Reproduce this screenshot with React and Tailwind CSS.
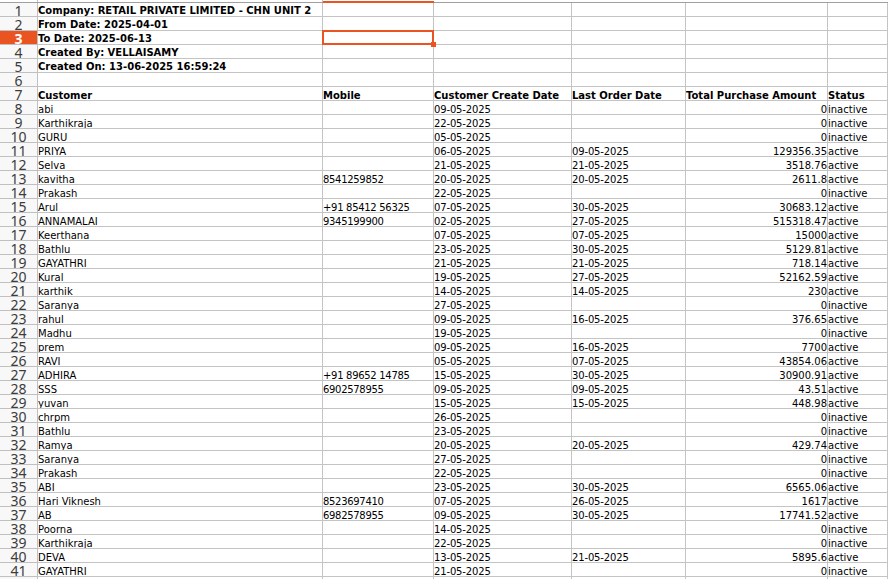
const rows = [
  ['abi', '', '09-05-2025', '', '0', 'inactive'],
  ['Karthikraja', '', '22-05-2025', '', '0', 'inactive'],
  ['GURU', '', '05-05-2025', '', '0', 'inactive'],
  ['PRIYA', '', '06-05-2025', '09-05-2025', '129356.35', 'active'],
  ['Selva', '', '21-05-2025', '21-05-2025', '3518.76', 'active'],
  ['kavitha', '8541259852', '20-05-2025', '20-05-2025', '2611.8', 'active'],
  ['Prakash', '', '22-05-2025', '', '0', 'inactive'],
  ['Arul', '+91 85412 56325', '07-05-2025', '30-05-2025', '30683.12', 'active'],
  ['ANNAMALAI', '9345199900', '02-05-2025', '27-05-2025', '515318.47', 'active'],
  ['Keerthana', '', '07-05-2025', '07-05-2025', '15000', 'active'],
  ['Bathlu', '', '23-05-2025', '30-05-2025', '5129.81', 'active'],
  ['GAYATHRI', '', '21-05-2025', '21-05-2025', '718.14', 'active'],
  ['Kural', '', '19-05-2025', '27-05-2025', '52162.59', 'active'],
  ['karthik', '', '14-05-2025', '14-05-2025', '230', 'active'],
  ['Saranya', '', '27-05-2025', '', '0', 'inactive'],
  ['rahul', '', '09-05-2025', '16-05-2025', '376.65', 'active'],
  ['Madhu', '', '19-05-2025', '', '0', 'inactive'],
  ['prem', '', '09-05-2025', '16-05-2025', '7700', 'active'],
  ['RAVI', '', '05-05-2025', '07-05-2025', '43854.06', 'active'],
  ['ADHIRA', '+91 89652 14785', '15-05-2025', '30-05-2025', '30900.91', 'active'],
  ['SSS', '6902578955', '09-05-2025', '09-05-2025', '43.51', 'active'],
  ['yuvan', '', '15-05-2025', '15-05-2025', '448.98', 'active'],
  ['chrpm', '', '26-05-2025', '', '0', 'inactive'],
  ['Bathlu', '', '23-05-2025', '', '0', 'inactive'],
  ['Ramya', '', '20-05-2025', '20-05-2025', '429.74', 'active'],
  ['Saranya', '', '27-05-2025', '', '0', 'inactive'],
  ['Prakash', '', '22-05-2025', '', '0', 'inactive'],
  ['ABI', '', '23-05-2025', '30-05-2025', '6565.06', 'active'],
  ['Hari Viknesh', '8523697410', '07-05-2025', '26-05-2025', '1617', 'active'],
  ['AB', '6982578955', '09-05-2025', '30-05-2025', '17741.52', 'active'],
  ['Poorna', '', '14-05-2025', '', '0', 'inactive'],
  ['Karthikraja', '', '22-05-2025', '', '0', 'inactive'],
  ['DEVA', '', '13-05-2025', '21-05-2025', '5895.6', 'active'],
  ['GAYATHRI', '', '21-05-2025', '', '0', 'inactive'],
];

const info = [
  'Company: RETAIL PRIVATE LIMITED - CHN UNIT 2',
  'From Date: 2025-04-01',
  'To Date: 2025-06-13',
  'Created By: VELLAISAMY',
  'Created On: 13-06-2025 16:59:24',
  '',
];

const head = ['Customer', 'Mobile', 'Customer Create Date', 'Last Order Date', 'Total Purchase Amount', 'Status'];

const widths = ['w-[285px]', 'w-[111px]', 'w-[138px]', 'w-[114px]', 'w-[142px]', 'w-[60px]'];

function RowNum({ n, active }) {
  return (
    <div
      className={`w-[38px] shrink-0 h-full text-center border-r border-b border-[#c0c0c0] text-[14px] leading-[11px] pt-[2px] font-['Noto_Sans',sans-serif] ${
        active ? 'bg-[#e95420] text-white font-bold' : 'bg-[#f8f8f8] text-[#3c3c3c]'
      }`}
    >
      {n}
    </div>
  );
}

function Cell({ i, children, bold, right, overflow, tight }) {
  return (
    <div
      className={`${widths[i]} shrink-0 h-full border-r border-b border-[#c4c4c4] whitespace-nowrap ${
        overflow ? 'overflow-visible leading-[15px]' : 'overflow-hidden leading-[17px]'
      } ${bold ? 'font-bold' : ''} ${right ? 'text-right' : ''} ${tight || ''}`}
    >
      {children}
    </div>
  );
}

export default function App() {
  return (
    <div className="relative w-[888px] h-[579px] overflow-hidden bg-white text-[10px] text-black font-['DejaVu_Sans',sans-serif]">
      <div className="h-[3px] flex border-b border-[#a0a0a0]">
        <div className="w-[38px] shrink-0 border-r border-[#c0c0c0]" />
        <div className="w-[285px] shrink-0 border-r border-[#c0c0c0]" />
        <div className="w-[111px] shrink-0 h-[2px] mt-px bg-[#e95420]" />
      </div>

      {info.map((text, i) => (
        <div key={i} className="h-[14px] flex">
          <RowNum n={i + 1} active={i === 2} />
          <Cell i={0} bold overflow>{text}</Cell>
          <Cell i={1} />
          <Cell i={2} />
          <Cell i={3} />
          <Cell i={4} />
          <Cell i={5} />
        </div>
      ))}

      <div className="h-[14px] flex">
        <RowNum n={7} />
        {head.map((h, i) => (
          <Cell key={h} i={i} bold>{h}</Cell>
        ))}
      </div>

      {rows.map((r, idx) => (
        <div key={idx} className="h-[14px] flex">
          <RowNum n={idx + 8} />
          <Cell i={0}>{r[0]}</Cell>
          <Cell i={1} tight="tracking-[-0.3px]">{r[1]}</Cell>
          <Cell i={2} tight="tracking-[-0.15px]">{r[2]}</Cell>
          <Cell i={3} tight="tracking-[-0.15px]">{r[3]}</Cell>
          <Cell i={4} right>{r[4]}</Cell>
          <Cell i={5}>{r[5]}</Cell>
        </div>
      ))}

      <div className="h-[14px] flex">
        <div className="w-[38px] shrink-0 h-full border-r border-[#c0c0c0] bg-[#f8f8f8]" />
        {widths.map((w) => (
          <div key={w} className={`${w} shrink-0 h-full border-r border-[#c4c4c4]`} />
        ))}
      </div>

      {/* selected cell */}
      <div className="absolute left-[322px] top-[30px] w-[112px] h-[15px] border-2 border-[#e95420]" />
      <div className="absolute left-[431px] top-[42px] w-[5px] h-[5px] bg-[#e95420]" />
    </div>
  );
}
